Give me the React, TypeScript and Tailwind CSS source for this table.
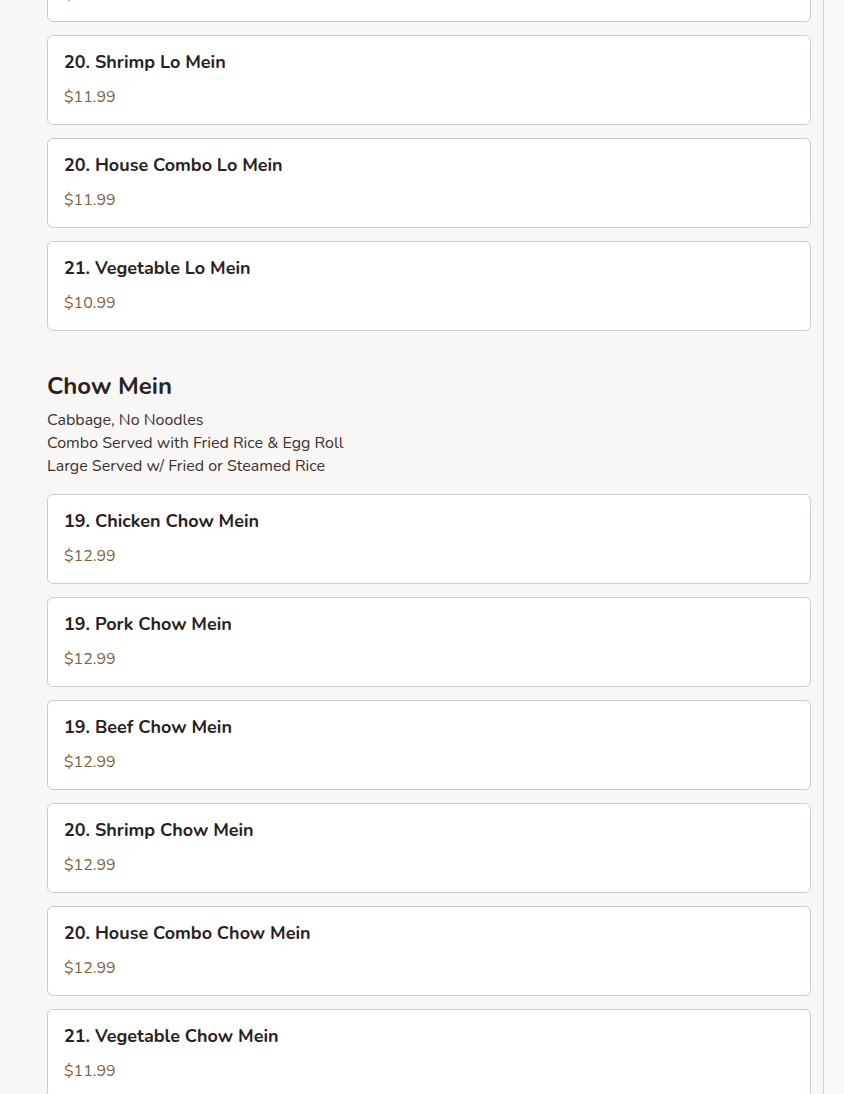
import React from "react";

type Item = { name: string; price: string };

const loMein: Item[] = [
  { name: "20. Shrimp Lo Mein", price: "$11.99" },
  { name: "20. House Combo Lo Mein", price: "$11.99" },
  { name: "21. Vegetable Lo Mein", price: "$10.99" },
];

const chowMein: Item[] = [
  { name: "19. Chicken Chow Mein", price: "$12.99" },
  { name: "19. Pork Chow Mein", price: "$12.99" },
  { name: "19. Beef Chow Mein", price: "$12.99" },
  { name: "20. Shrimp Chow Mein", price: "$12.99" },
  { name: "20. House Combo Chow Mein", price: "$12.99" },
  { name: "21. Vegetable Chow Mein", price: "$11.99" },
];

function Card({ item, className = "" }: { item: Item; className?: string }) {
  return (
    <div
      className={
        "rounded-md border border-[#cfcccb] bg-white px-4 pt-[14px] pb-[15px] " +
        className
      }
    >
      <div className="text-[18px] font-bold leading-6 text-[#2a2222]">{item.name}</div>
      <div className="mt-[11px] text-[16px] leading-6 text-[#7a6440]">{item.price}</div>
    </div>
  );
}

export default function App() {
  return (
    <div
      className="flex h-[1094px] w-[844px] overflow-hidden bg-[#f9f8f6]"
      style={{ fontFamily: '"Nunito", "Lato", "Open Sans", sans-serif' }}
    >
      <div className="flex w-[824px] shrink-0 flex-col border-r border-[#d4d2d0] bg-[#f8f7f5] pl-[47px] pr-[12px]">
        <div className="-mt-[68px] flex flex-col gap-[13px]">
          <Card item={{ name: "19. Beef Lo Mein", price: "$11.99" }} />
          {loMein.map((it) => (
            <Card key={it.name} item={it} />
          ))}
        </div>
        <h2 className="mt-[39px] text-[24px] font-bold leading-8 text-[#2a2222]">Chow Mein</h2>
        <div className="mt-[7px] text-[16px] leading-[23px] text-[#3a3232]">
          <div>Cabbage, No Noodles</div>
          <div>Combo Served with Fried Rice &amp; Egg Roll</div>
          <div>Large Served w/ Fried or Steamed Rice</div>
        </div>
        <div className="mt-[16px] flex flex-col gap-[13px]">
          {chowMein.map((it) => (
            <Card key={it.name} item={it} />
          ))}
        </div>
      </div>
      <div className="flex-1 bg-[#fbfaf9]" />
    </div>
  );
}
